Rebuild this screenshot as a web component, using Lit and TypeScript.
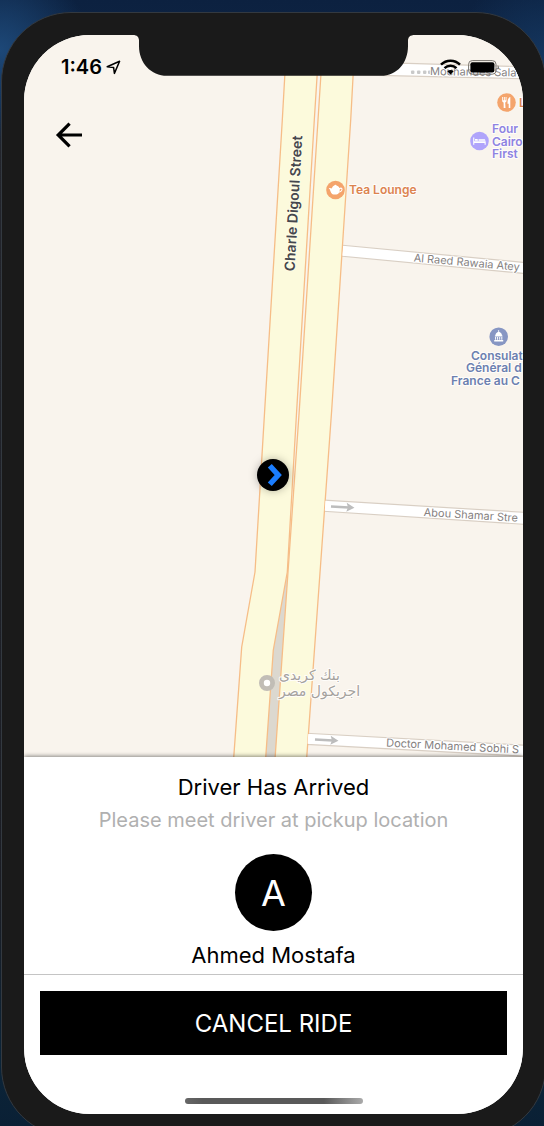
import { LitElement, html, svg, css } from "lit";
import { customElement, property } from "lit/decorators.js";

@customElement("status-bar")
class StatusBar extends LitElement {
  static styles = css`
    :host {
      display: flex;
      justify-content: space-between;
      align-items: center;
      padding: 0 23px 0 37px;
      height: 24px;
      color: #000;
    }
    .group {
      display: flex;
      align-items: center;
      gap: 4px;
    }
    .signals {
      gap: 7px;
    }
    .time {
      font: 600 20px/24px Inter, sans-serif;
    }
    svg {
      display: block;
    }
  `;

  render() {
    return html`
      <div class="group">
        <span class="time">1:46</span>
        <svg width="15" height="15" viewBox="0 0 15 15" aria-label="Location in use">
          <path d="M1.2 6.8 13.6 1.2 8.4 13.4 7.6 7.4Z" fill="none" stroke="#000" stroke-width="1.5" stroke-linejoin="round" />
        </svg>
      </div>
      <div class="group signals">
        <svg width="21" height="16" viewBox="0 0 21 16" aria-label="Wi-Fi">
          <g fill="none" stroke="#000" stroke-width="2.5">
            <path d="M1 5.6a13.400 13.400 0 0 1 19 0" />
            <path d="M4.500 9.200a8.500 8.500 0 0 1 12 0" />
          </g>
          <path d="M10.500 15.600 7.300 12.200a4.600 4.600 0 0 1 6.400 0Z" fill="#000" />
        </svg>
        <svg width="32" height="15" viewBox="0 0 32 15" aria-label="Battery full">
          <rect x=".6" y=".6" width="27.4" height="13.6" rx="3.6" fill="none" stroke="#77736d" stroke-width="1" />
          <rect x="2.4" y="2.2" width="24" height="10.400" rx="2" />
          <path d="M29.6 5a2.8 2.8 0 0 1 0 4.8Z" fill="#77736d" />
        </svg>
      </div>
    `;
  }
}

@customElement("city-map")
class CityMap extends LitElement {
  static styles = css`
    :host {
      display: block;
      background: #f9f4ed;
    }
    .canvas {
      display: block;
      width: 100%;
      height: 100%;
    }
    text {
      font-family: Inter, sans-serif;
      font-size: 12px;
      font-weight: 500;
      paint-order: stroke;
      stroke: #fffdfa;
      stroke-width: 2px;
      stroke-linejoin: round;
    }
    .street {
      fill: #85817f;
      font-weight: 400;
      font-size: 11px;
      stroke: #fff;
    }
    .avenue {
      fill: #45464d;
      font-size: 14px;
      font-weight: 600;
      stroke: #fefce4;
    }
    .food {
      fill: #dc8350;
      font-weight: 600;
    }
    .hotel {
      fill: #8e83e2;
      font-weight: 600;
    }
    .civic {
      fill: #6c80b0;
      font-weight: 600;
    }
    .bank {
      fill: #a5a29e;
      font-family: "DejaVu Sans", sans-serif;
      font-size: 14px;
      direction: rtl;
      text-anchor: end;
    }
    .lane {
      fill: #fff;
      stroke: #d9cfc4;
      stroke-width: 1.2;
    }
    .highway {
      fill: #fcfadc;
      stroke: #f6bd87;
      stroke-width: 1.3;
      stroke-linejoin: round;
    }
    .median {
      fill: #dcd8cf;
    }
    .arrow {
      fill: none;
      stroke: #bdbdbd;
      stroke-width: 2.4;
    }
    .arrow-head {
      fill: #bdbdbd;
    }
    .white {
      fill: #fff;
    }
    .halo {
      filter: drop-shadow(0 0 4px rgba(0, 0, 0, 0.28));
    }
  `;

  private oneWay(x: number, y: number) {
    return svg`
      <g transform="translate(${x} ${y}) rotate(3)">
        <path class="arrow" d="M0 0H18" />
        <path class="arrow-head" d="M15.5-4.5 23.5 0 15.5 4.5 17 0Z" />
      </g>
    `;
  }

  render() {
    return html`
      <svg class="canvas" viewBox="24 35 499 722" preserveAspectRatio="xMidYMax slice" role="img" aria-label="Map">
        <path class="lane" d="M345 62.2 408 63.4 530 66.9V78.9L345 74.6Z" />
        <path class="lane" d="M340 245 530 263V274L340 256Z" />
        <path class="lane" d="M320 499.8 530 512.7V524.7L320 511Z" />
        <path class="lane" d="M302 733 530 745.5V756.5L302 744.2Z" />

        <path class="median" d="M288 572 270 650 262 760H278Z" />
        <path class="highway" d="M287.2 33 282.3 120 264.7 410 255 572 241.7 647 233.4 762H265.4L273.3 650 287.3 572 296.7 410 314.3 120 319.8 33Z" />
        <path class="highway" d="M323.6 33 318 120 299.3 410 288 572 274.8 762H306.4L331.7 410 350.7 120 355.4 33Z" />
        <path class="white" d="M343.4 246 346 246.2V255.9L342.6 255.6ZM325.4 500.8 328 501V510.8L324.8 510.6ZM308.2 734 311 734.2V744L307.6 743.8Z" />

        <g fill="#c9c9c9">
          <rect x="411" y="70.5" width="3.4" height="3.4" rx="1" />
          <rect x="417" y="70.5" width="3.4" height="3.4" rx="1" />
          <rect x="423" y="70.5" width="3.4" height="3.4" rx="1" />
          <rect x="428" y="70.5" width="3.4" height="3.4" rx="1" />
        </g>
        ${this.oneWay(331, 506.5)} ${this.oneWay(315, 739.5)}

        <text class="street" transform="translate(430 75) rotate(1)">Mouhandes Sala</text>
        <text class="street" transform="translate(413.5 261.5) rotate(5)">Al Raed Rawaia Atey</text>
        <text class="street" transform="translate(423.5 516) rotate(3.5)">Abou Shamar Stre</text>
        <text class="street" transform="translate(386 746.5) rotate(3)">Doctor Mohamed Sobhi S</text>
        <text class="avenue" transform="translate(294.5 271.5) rotate(-86.7)">Charle Digoul Street</text>

        <g transform="translate(335.5 190)">
          <circle r="9.3" fill="#f4a46c" />
          <path class="white" d="M-1.2-4.6a1.2 1.1 0 0 1 2.2 0C2.6-4.200 3.600-3.200 3.900-2C5.200-3 7.300-2.600 7 -.4C6.700 1.500 5 2.500 3.400 2.700 2.900 3.600 2 4.400 1 4.400h-3C-3.400 4.400-4.400 3.200-4.800 1.800-5.400.6-5.300-.8-6.800-1.800c1.2-.4 2.3-.2 3 .4.4-1.4 1.2-2.7 2.600-3.200Z" />
          <path d="M4.300-.7C5.200-1.700 6.200-1.400 6-.4 5.800.7 4.900 1.400 4 1.700Z" fill="#f4a46c" />
        </g>
        <text class="food" x="349" y="194">Tea Lounge</text>

        <g transform="translate(506.5 102.5)">
          <circle r="9.3" fill="#f4a46c" />
          <path class="white" d="M-4.3-5.4h.9v3.2h.8v-3.2h.9v3.2h.8v-3.2h.9v4C0-.6-.9-.1-1.3.1L-1 5.6h-1.8L-2.9.1c-.6-.2-1.4-.7-1.4-1.5ZM3.8-5.5V5.6H2.2V1.2H1C1-2.2 1.5-4.8 3.8-5.5Z" />
        </g>
        <text class="food" x="519" y="107">L</text>

        <g transform="translate(479.5 141)">
          <circle r="9.3" fill="#b0a4fb" />
          <path class="white" d="M-6.3-3.6h1.1V.3H6.2v3.5H5.1V1.9H-5.2v1.9h-1.1Z" />
          <path class="white" d="M-4.5-2h2c.6 0 .9.3.9.9v.8h-2.9ZM-1-1.8H4.8c.7 0 1.1.5 1.1 1.5H-1Z" />
        </g>
        <text class="hotel" x="492" y="133">Four</text>
        <text class="hotel" x="492" y="146">Cairo</text>
        <text class="hotel" x="492" y="158">First</text>

        <g transform="translate(498.7 336.7)">
          <circle r="9.3" fill="#8796c3" />
          <path class="white" d="M-.4-6.6h.8v1.7C2.3-4.2 3.2-2.7 3.3-1.2h.5v1h-7.6v-1h.5C-3.2-2.7-2.3-4.2-.4-4.9ZM-3.6.3h1V3h-1ZM-1.6.3h1V3h-1ZM.5.3h1V3h-1ZM2.6.3h1V3h-1ZM-4.5 3.4h9v1.3h-9Z" />
        </g>
        <text class="civic" x="471" y="360">Consulat</text>
        <text class="civic" x="466" y="372">Général d</text>
        <text class="civic" x="451" y="385">France au C</text>

        <circle cx="267" cy="683" r="5.6" fill="#fff" stroke="#c1bdb6" stroke-width="4.8" />
        <text class="bank" x="279" y="680">بنك كريدى</text>
        <text class="bank" x="279" y="696">اجريكول مصر</text>

        <circle class="halo" cx="273" cy="475" r="16" />
        <path d="M269.800 465.800 278.200 475 269.800 484.200" fill="none" stroke="#1a7dff" stroke-width="5.4" stroke-linejoin="miter" />
      </svg>
    `;
  }
}

@customElement("ride-sheet")
class RideSheet extends LitElement {
  @property() driver = "Ahmed Mostafa";

  static styles = css`
    :host {
      display: block;
      background: #fff;
      color: #000;
      font-family: Inter, sans-serif;
      text-align: center;
      box-shadow: 0 -1px 4px rgba(0, 0, 0, 0.45);
    }
    .summary {
      display: flex;
      flex-direction: column;
      align-items: center;
      padding: 14px 16px 3px;
      border-bottom: 1px solid #c4c4c4;
    }
    .title,
    .hint,
    .name {
      margin: 0;
      font-weight: 400;
      line-height: 32px;
    }
    .title,
    .name {
      font-size: 22px;
    }
    .hint {
      margin-top: 1px;
      font-size: 20px;
      color: #b0b0b0;
    }
    .avatar {
      display: grid;
      place-items: center;
      width: 77px;
      height: 77px;
      margin: 18px 0 8px;
      border-radius: 50%;
      background: #000;
      color: #fff;
      font-size: 36px;
    }
    .actions {
      display: flex;
      padding: 16px 16px 59px;
    }
    .cancel {
      flex: 1;
      height: 64px;
      border: 0;
      padding: 2px 0 0;
      background: #000;
      color: #fff;
      font: 400 24px/32px Inter, sans-serif;
    }
  `;

  render() {
    return html`
      <section class="summary">
        <h1 class="title">Driver Has Arrived</h1>
        <p class="hint">Please meet driver at pickup location</p>
        <div class="avatar" aria-hidden="true">${this.driver[0]}</div>
        <p class="name">${this.driver}</p>
      </section>
      <div class="actions">
        <button class="cancel" type="button">CANCEL RIDE</button>
      </div>
    `;
  }
}

@customElement("app-root")
class AppRoot extends LitElement {
  static styles = css`
    :host {
      display: flex;
      flex-direction: column;
      height: 100vh;
      overflow: hidden;
      background:
        radial-gradient(circle at 0 50px, #1d4878 0, rgba(29, 72, 120, 0) 90px),
        radial-gradient(circle at 100% 60px, #14365f 0, rgba(20, 54, 95, 0) 90px),
        linear-gradient(#0c2140 0, #102847 100px, #23252c 150px, #1b1d24 900px, #0b2438 1060px, #0a2035 100%);
    }
    .phone {
      flex: 1;
      display: flex;
      margin: 12px -2px -11px 1px;
      padding: 22px;
      border: 1px solid #333940;
      border-radius: 70px;
      background: #1a1a1a;
    }
    .screen {
      position: relative;
      flex: 1;
      display: flex;
      flex-direction: column;
      overflow: hidden;
      border-radius: 66px;
      background: #fff;
    }
    .map {
      flex: 1;
      min-height: 0;
    }
    .sheet {
      position: relative;
    }
    .overlay {
      position: absolute;
      inset: 0 0 auto;
    }
    .notch {
      display: block;
      margin: 0 auto;
    }
    .status {
      position: absolute;
      inset: 20px 0 auto;
    }
    .back {
      display: block;
      margin: 39px 0 0 25px;
      width: 40px;
      height: 40px;
      padding: 6px;
      border: 0;
      background: none;
    }
    .back svg {
      display: block;
    }
    .home {
      position: absolute;
      bottom: 10px;
      left: 50%;
      width: 178px;
      height: 6px;
      margin-left: -89px;
      border-radius: 3px;
      background: linear-gradient(90deg, #666, #595959 10%, #595959 78%, #aaa);
    }
  `;

  render() {
    return html`
      <main class="phone">
        <div class="screen">
          <city-map class="map"></city-map>
          <div class="overlay">
            <svg class="notch" width="282" height="41" viewBox="0 0 282 41" aria-hidden="true">
              <path d="M0 0C4 0 6 2 6 6V11C6 28 18 40.8 34 40.8H248C264 40.8 275 28 275 11V6C275 2 277 0 282 0Z" fill="#1a1a1a" />
            </svg>
            <status-bar class="status"></status-bar>
            <button class="back" type="button" aria-label="Back">
              <svg width="28" height="28" viewBox="0 0 28 28">
                <path d="M27 14H3M14.6 2.6 3.2 14 14.6 25.4" fill="none" stroke="#000" stroke-width="3.200" />
              </svg>
            </button>
          </div>
          <ride-sheet class="sheet"></ride-sheet>
          <div class="home"></div>
        </div>
      </main>
    `;
  }
}
